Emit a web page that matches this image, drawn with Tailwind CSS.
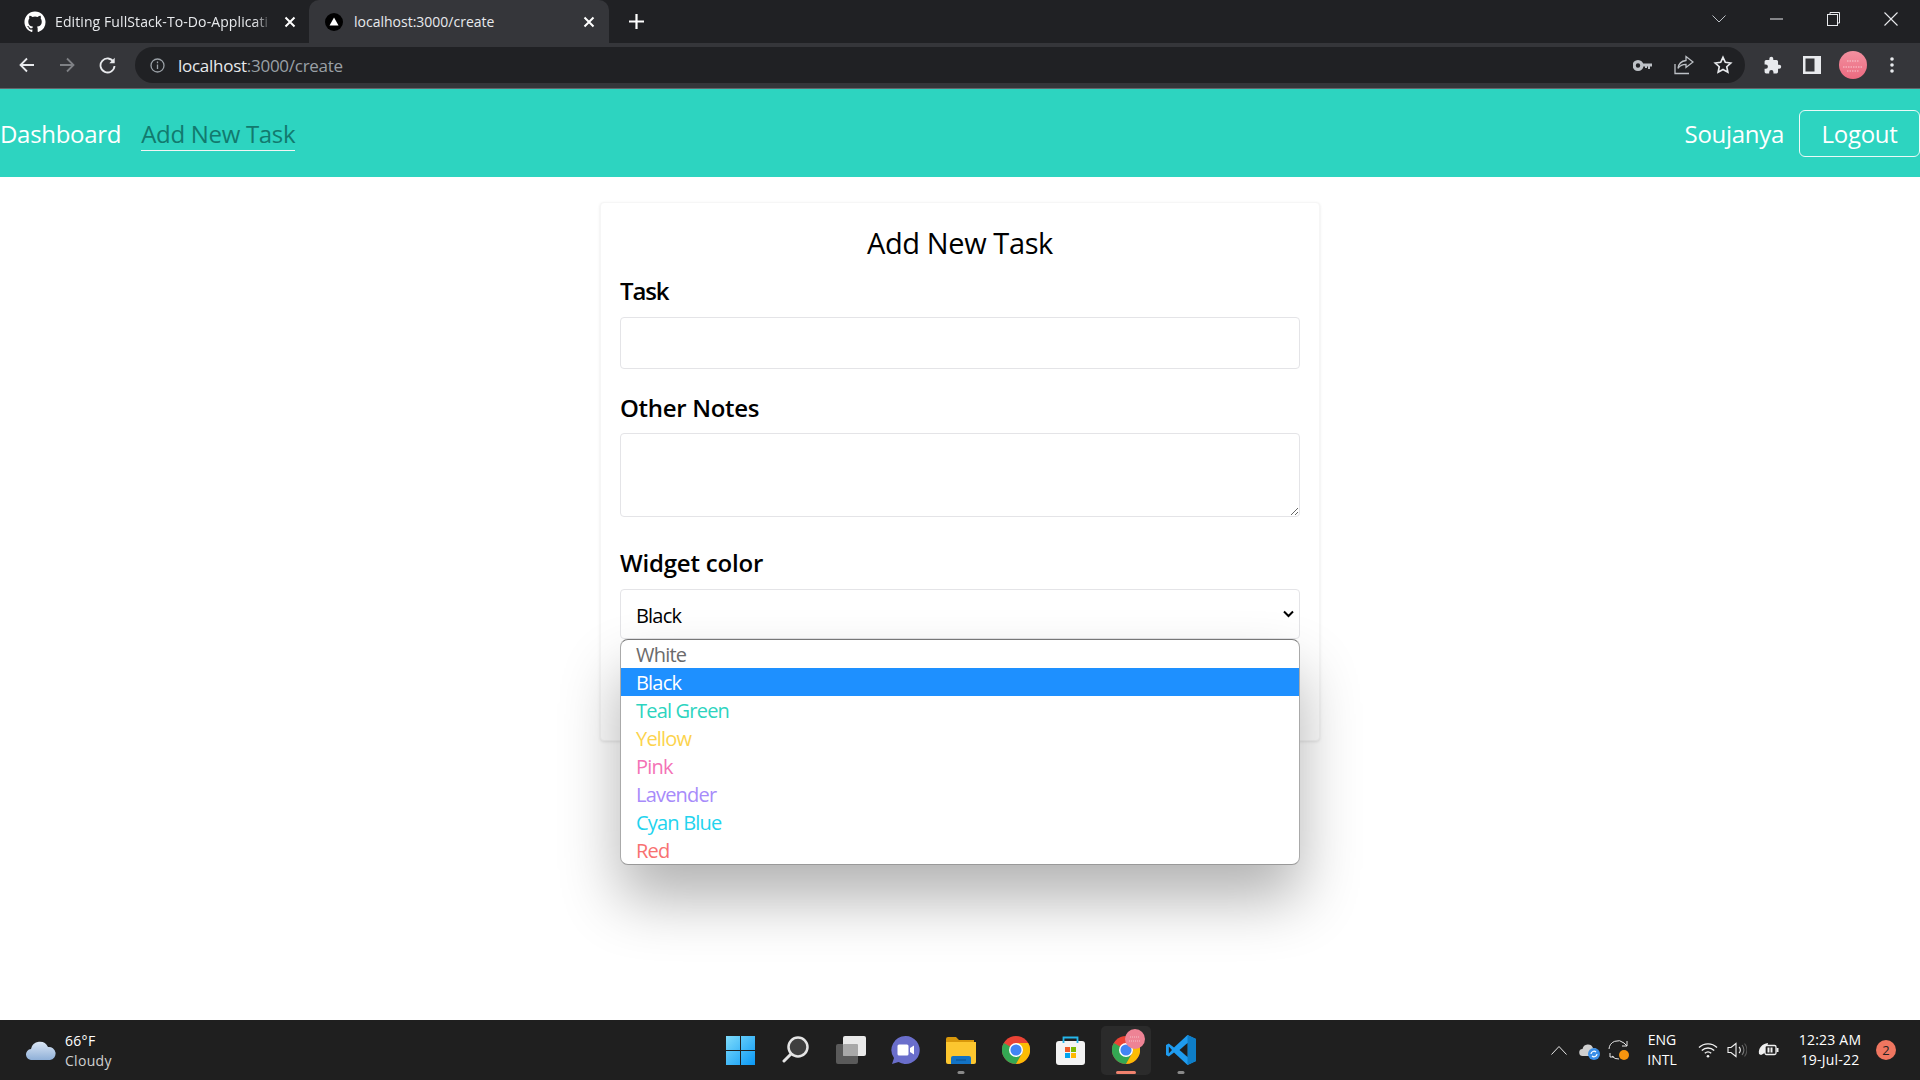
<!DOCTYPE html>
<html lang="en">
<head>
<meta charset="utf-8">
<title>localhost:3000/create</title>
<script src="https://cdn.jsdelivr.net/npm/@tailwindcss/browser@4"></script>
</head>
<body class="m-0 bg-white font-['Open_Sans','Noto_Sans',sans-serif]">
<svg width="0" height="0" class="absolute">
  <symbol id="chrome" viewBox="0 0 48 48">
    <circle cx="24" cy="24" r="24" fill="#ea4335"/>
    <path d="M24 24 L3.2 12 A24 24 0 0 0 24 48 L36 27 Z" fill="#34a853"/>
    <path d="M24 12 H44.8 A24 24 0 0 1 24 48 L36 27 Z" fill="#fbbc04"/>
    <circle cx="24" cy="24" r="12" fill="#fff"/>
    <circle cx="24" cy="24" r="9.5" fill="#4285f4"/>
  </symbol>
</svg>
<div class="flex h-[1080px] w-[1920px] flex-col overflow-hidden">
  <!-- tab strip -->
  <div class="flex h-[43px] shrink-0 items-center bg-[#202124] text-white">
    <div class="flex h-full w-[309px] items-center pl-[24px] pr-[11px] text-[14px] tracking-[0.1px]">
      <svg class="h-[22px] w-[22px] shrink-0" viewBox="0 0 24 24" fill="#fff"><path d="M12 .5C5.65.5.5 5.65.5 12c0 5.08 3.29 9.39 7.86 10.91.58.1.79-.25.79-.56v-2.15c-3.2.7-3.87-1.36-3.87-1.36-.52-1.33-1.28-1.68-1.28-1.68-1.05-.71.08-.7.08-.7 1.16.08 1.77 1.19 1.77 1.19 1.03 1.76 2.69 1.25 3.35.96.1-.75.4-1.25.73-1.54-2.55-.29-5.24-1.28-5.24-5.69 0-1.26.45-2.28 1.19-3.09-.12-.29-.52-1.46.11-3.05 0 0 .97-.31 3.16 1.18a11 11 0 0 1 5.76 0c2.2-1.49 3.16-1.18 3.16-1.18.63 1.59.23 2.76.11 3.05.74.81 1.19 1.83 1.19 3.09 0 4.42-2.69 5.39-5.25 5.68.41.36.78 1.06.78 2.14v3.17c0 .31.21.67.8.56A11.5 11.5 0 0 0 23.5 12C23.5 5.65 18.35.5 12 .5z"/></svg>
      <span class="mb-[1px] ml-[9px] w-[217px] shrink-0 whitespace-nowrap text-[#e8eaed] [mask-image:linear-gradient(to_right,#000_92%,transparent)]">Editing FullStack-To-Do-Applicati</span>
      <svg class="ml-[12px] h-[12px] w-[12px] shrink-0" viewBox="0 0 12 12" stroke="#fff" stroke-width="2"><path d="M1.5 1.5l9 9M10.5 1.5l-9 9"/></svg>
    </div>
    <div class="flex h-full w-[300px] items-center rounded-t-[10px] bg-[#35363a] pl-[16px] text-[14px] tracking-[0px]">
      <svg class="h-[18px] w-[18px] shrink-0" viewBox="0 0 18 18"><circle cx="9" cy="9" r="9" fill="#000"/><path d="M9 4.5L13.5 12.5H4.5Z" fill="#fff"/></svg>
      <span class="mb-[1px] ml-[11px] w-[224px] shrink-0 whitespace-nowrap text-[#e8eaed]">localhost:3000/create</span>
      <svg class="ml-[5px] h-[12px] w-[12px] shrink-0" viewBox="0 0 12 12" stroke="#fff" stroke-width="2"><path d="M1.5 1.5l9 9M10.5 1.5l-9 9"/></svg>
    </div>
    <svg class="ml-[20px] h-[15px] w-[15px]" viewBox="0 0 15 15" stroke="#fff" stroke-width="2.2"><path d="M7.5 0v15M0 7.5h15"/></svg>
    <div class="flex-1"></div>
    <svg class="mb-[5px] mr-[44px] h-[8px] w-[14px]" viewBox="0 0 14 8" fill="none" stroke="#bdc1c6" stroke-width="1"><path d="M.5.5L7 7 13.5.5"/></svg>
    <svg class="mb-[5px] mr-[44px] h-[2px] w-[13px]" viewBox="0 0 13 2"><path d="M0 1h13" stroke="#e8eaed" stroke-width="1"/></svg>
    <svg class="mb-[5px] mr-[44px] h-[14px] w-[13px]" viewBox="0 0 13 14" fill="none" stroke="#e8eaed" stroke-width="1"><rect x=".5" y="2.5" width="10" height="11"/><path d="M3 2.5V.5h9.5v10.5h-2"/></svg>
    <svg class="mb-[5px] mr-[22px] h-[14px] w-[14px]" viewBox="0 0 14 14" stroke="#e8eaed" stroke-width="1.1"><path d="M.5.5l13 13M13.5.5l-13 13"/></svg>
  </div>
  <!-- toolbar -->
  <div class="flex h-[46px] shrink-0 items-center border-b border-[#63666b] bg-[#35363a] pb-[1px]">
    <svg class="ml-[19px] h-[16px] w-[16px]" viewBox="0 0 16 16" fill="none" stroke="#e8eaed" stroke-width="1.8"><path d="M15 8H2M8 1.5L1.5 8 8 14.5"/></svg>
    <svg class="ml-[24px] h-[16px] w-[16px]" viewBox="0 0 16 16" fill="none" stroke="#7f8185" stroke-width="1.8"><path d="M1 8h13M8 1.5L14.5 8 8 14.5"/></svg>
    <svg class="ml-[24px] h-[17px] w-[17px]" viewBox="0 0 17 17" fill="none" stroke="#e8eaed" stroke-width="1.8"><path d="M14.6 5A7 7 0 1 0 15.5 9"/><path d="M15.7 .8v5.4h-5.4" fill="#e8eaed" stroke="none"/></svg>
    <div class="ml-[19px] flex h-[36px] w-[1610px] items-center rounded-full bg-[#202124]">
      <svg class="ml-[15px] h-[15px] w-[15px]" viewBox="0 0 15 15" fill="none" stroke="#9aa0a6" stroke-width="1.3"><circle cx="7.5" cy="7.5" r="6.5"/><path d="M7.5 6.5v4.5M7.5 3.6v1.6"/></svg>
      <span class="ml-[13px] text-[17px] leading-none tracking-[-0.27px] text-[#e8eaed]">localhost<span class="text-[#9aa0a6]">:3000/create</span></span>
      <div class="flex-1"></div>
      <svg class="mr-[22px] h-[11px] w-[19px]" viewBox="0 0 19 11" fill="#bdc1c6"><path d="M5 0a5.5 5.5 0 1 1 0 11A5.5 5.5 0 0 1 5 0zm0 3.3a2.2 2.2 0 1 0 0 4.4 2.2 2.2 0 0 0 0-4.4zM10 3.5h9v3h-2v2.6h-2V6.5h-1v1.6h-2V6.5h-2z"/></svg>
      <svg class="mr-[19px] h-[20px] w-[20px]" viewBox="0 0 20 20" fill="none" stroke="#bdc1c6" stroke-width="1.3"><path d="M1 9v9.5h14"/><path d="M12 1.5L19 7l-7 5.500V9.300c-3.600 0-6 1-8 4 .6-4.500 3.400-7.300 8-7.800z"/></svg>
      <svg class="mr-[12px] h-[20px] w-[20px]" viewBox="0 0 24 24" fill="none" stroke="#e8eaed" stroke-width="2"><path d="M12 2.800l2.800 6 6.500.8-4.800 4.500 1.300 6.500-5.800-3.300-5.800 3.300 1.300-6.500-4.800-4.500 6.500-.8z"/></svg>
    </div>
    <svg class="ml-[18px] h-[19px] w-[19px]" viewBox="0 0 24 24" fill="#e8eaed"><path d="M20.500 11H19V7a2 2 0 0 0-2-2h-4V3.500a2.500 2.500 0 0 0-5 0V5H4a2 2 0 0 0-2 2v3.800h1.500a2.700 2.700 0 0 1 0 5.400H2V20a2 2 0 0 0 2 2h3.800v-1.500a2.700 2.700 0 0 1 5.400 0V22H17a2 2 0 0 0 2-2v-4h1.500a2.500 2.500 0 0 0 0-5z"/></svg>
    <svg class="ml-[21px] h-[18px] w-[18px]" viewBox="0 0 18 18"><rect width="18" height="18" fill="#e8eaed"/><rect x="2.500" y="2.500" width="9" height="13" fill="#35363a"/></svg>
    <svg class="ml-[18px] h-[28px] w-[28px]" viewBox="0 0 28 28"><defs><linearGradient id="av" x1="0" y1="0" x2="0" y2="1"><stop offset="0" stop-color="#f2909f"/><stop offset="1" stop-color="#ec6a80"/></linearGradient></defs><circle cx="14" cy="14" r="14" fill="url(#av)"/><path d="M8 10h12M4 16h20M8 20h12" stroke="#fff" stroke-opacity=".6" stroke-dasharray="1.500 1"/></svg>
    <svg class="ml-[23px] h-[16px] w-[4px]" viewBox="0 0 4 16" fill="#e8eaed"><circle cx="2" cy="2" r="1.800"/><circle cx="2" cy="8" r="1.800"/><circle cx="2" cy="14" r="1.800"/></svg>
  </div>
  <!-- navbar -->
  <nav class="flex h-[88px] shrink-0 items-center bg-[#2dd4c0] text-[24px] tracking-[-0.3px] text-white">
    <a class="pt-[1px]">Dashboard</a>
    <a class="ml-[20px] mt-[1px] border-b border-[#f1f5f4] leading-[33px] text-[#127a6e]">Add New Task</a>
    <div class="flex-1"></div>
    <span class="mt-[1px]">Soujanya</span>
    <button class="ml-[15px] h-[47px] w-[121px] rounded-[6px] border border-[#eafaf8] pt-[1px] text-white">Logout</button>
  </nav>
  <!-- page -->
  <main class="relative flex-1 bg-white">
    <div class="mx-auto mt-[25px] flex h-[539px] w-[720px] flex-col rounded-[4px] border border-[#f6f6f6] bg-white px-[19px] shadow-[0_1px_3px_rgba(0,0,0,0.1)] text-black">
      <h1 class="mt-[17px] text-center text-[29px] leading-[46px] tracking-[-0.4px]">Add New Task</h1>
      <label class="mt-[9px] text-[24px] font-semibold leading-[32px] tracking-[-1.1px]">Task</label>
      <input class="mt-[10px] h-[52px] w-full shrink-0 rounded-[4px] border border-[#e4e4e7] bg-white" type="text">
      <label class="mt-[23px] text-[24px] font-semibold leading-[32px] tracking-[-0.3px]">Other Notes</label>
      <textarea class="mt-[9px] h-[84px] w-full shrink-0 resize-y rounded-[4px] border border-[#e4e4e7] bg-white"></textarea>
      <label class="mt-[30px] text-[24px] font-semibold leading-[32px] tracking-[-0.2px]">Widget color</label>
      <div class="mt-[10px] flex h-[50px] w-full shrink-0 items-center rounded-[4px] border border-[#e4e4e7] pl-[15px] pr-[5px] text-[20px] tracking-[-0.8px]">
        <span class="mt-[3px] flex-1">Black</span>
        <svg class="h-[8px] w-[11px]" viewBox="0 0 11 8" fill="none" stroke="#000" stroke-width="2"><path d="M1 1.500l4.500 4.500L10 1.500"/></svg>
      </div>
      <button class="mt-[17px] h-[45px] w-full shrink-0 rounded-[4px] bg-[#2dd4c0]" aria-label="Add task"></button>
    </div>
    <!-- open select popup -->
    <ul class="absolute left-[620px] top-[462px] w-[680px] overflow-hidden rounded-[8px] border border-t-[#777] border-r-[#aaa] border-b-[#999] border-l-[#aaa] bg-white text-[20px] leading-[30px] tracking-[-0.8px] shadow-[0_34px_60px_rgba(0,0,0,0.3)]">
      <li class="h-[28px] pl-[15px] text-[#6b6b6b]">White</li>
      <li class="h-[28px] bg-[#1e90ff] pl-[15px] text-white">Black</li>
      <li class="h-[28px] pl-[15px] text-[#2dd4bf]">Teal Green</li>
      <li class="h-[28px] pl-[15px] text-[#fcd34d]">Yellow</li>
      <li class="h-[28px] pl-[15px] text-[#f472b6]">Pink</li>
      <li class="h-[28px] pl-[15px] text-[#a78bfa]">Lavender</li>
      <li class="h-[28px] pl-[15px] text-[#22d3ee]">Cyan Blue</li>
      <li class="h-[28px] pl-[15px] text-[#f87171]">Red</li>
    </ul>
  </main>
  <!-- taskbar -->
  <footer class="relative flex h-[60px] shrink-0 items-center bg-[#1f1f1f] text-white">
    <svg class="ml-[26px] h-[20px] w-[30px]" viewBox="0 0 30 20"><defs><linearGradient id="cl" x1="0" y1="0" x2="0" y2="1"><stop offset="0" stop-color="#dbe6f5"/><stop offset="1" stop-color="#8fb0d8"/></linearGradient></defs><path d="M6 20a5.500 5.500 0 0 1-1-11 9 9 0 0 1 17-2 6.500 6.500 0 0 1 2 13z" fill="url(#cl)"/></svg>
    <div class="ml-[9px] flex flex-col pt-[2px] text-[14px] leading-[20px] tracking-[0.3px]">
      <span>66°F</span>
      <span class="text-[#cfcfcf]">Cloudy</span>
    </div>
    <div class="flex-1"></div>
    <div class="flex items-center gap-[8px] pr-[24px] text-[14px] leading-[20px]">
      <svg class="h-[10px] w-[16px]" viewBox="0 0 16 10" fill="none" stroke="#e8e8e8" stroke-width="1"><path d="M.5 9.500L8 1.500l7.500 8"/></svg>
      <svg class="ml-[4px] h-[20px] w-[21px]" viewBox="0 0 21 20"><path d="M4 16a3.500 3.500 0 0 1-.500-7 5.500 5.500 0 0 1 10.500-1 4 4 0 0 1 1 8z" fill="#cfcfcf"/><circle cx="15" cy="14" r="6" fill="#3a8ee6"/><path d="M12 14a3 3 0 0 1 5-2M18 14a3 3 0 0 1-5 2" fill="none" stroke="#fff" stroke-width="1.200"/></svg>
      <svg class="ml-[0px] h-[22px] w-[22px]" viewBox="0 0 22 22" fill="none" stroke="#e8e8e8" stroke-width="1"><path d="M1 10a9 9 0 0 1 15-6l3 3M19 2v5h-5M11 20a8 8 0 0 1-7-3M2 14v4h4"/><circle cx="16" cy="16" r="5" fill="#f7950e" stroke="none"/></svg>
      <div class="ml-[6px] flex w-[36px] flex-col items-center tracking-[0px]"><span>ENG</span><span>INTL</span></div>
      <svg class="ml-[10px] h-[16px] w-[20px]" viewBox="0 0 20 16" fill="none" stroke="#f0f0f0" stroke-width="1.400"><path d="M1 5.500a13 13 0 0 1 18 0M3.800 8.500a9 9 0 0 1 12.400 0M6.800 11.300a4.800 4.800 0 0 1 6.400 0"/><circle cx="10" cy="14.300" r="1.300" fill="#f0f0f0" stroke="none"/></svg>
      <svg class="ml-[1px] h-[16px] w-[20px]" viewBox="0 0 20 16" fill="none" stroke="#f0f0f0" stroke-width="1.100"><path d="M1 5.500h3L9 1.500v13L4 10.500H1z"/><path d="M12 5a4 4 0 0 1 0 6"/><path d="M15 3a7.500 7.500 0 0 1 0 10" stroke="#777"/><path d="M17.500 1.500a10 10 0 0 1 0 13" stroke="#555"/></svg>
      <svg class="ml-[3px] h-[16px] w-[21px]" viewBox="0 0 21 16"><path d="M1 12C0 6 4 2 10 1 9 6 9 11 3 13z" fill="#f0f0f0"/><rect x="7" y="3.500" width="11" height="9" rx="1.500" fill="#1f1f1f" stroke="#f0f0f0" stroke-width="1.300"/><rect x="9.500" y="5.500" width="2" height="5" fill="#f0f0f0"/><rect x="12.500" y="5.500" width="2" height="5" fill="#f0f0f0"/><rect x="18.500" y="6" width="2" height="4" fill="#f0f0f0"/></svg>
      <div class="ml-[9px] flex w-[68px] flex-col items-center tracking-[0.2px]"><span>12:23 AM</span><span>19-Jul-22</span></div>
      <div class="ml-[4px] flex h-[20px] w-[20px] items-center justify-center rounded-full bg-[#ef7660] text-[13px] text-[#222]">2</div>
    </div>
    <!-- centered app icons -->
    <div class="absolute left-[712px] top-0 flex h-full items-center">
      <div class="relative flex h-[49px] w-[56px] items-center justify-center">
        <svg class="h-[29px] w-[29px]" viewBox="0 0 29 29"><defs><linearGradient id="wi" x1="0" y1="0" x2="1" y2="1"><stop offset="0" stop-color="#7fdcfb"/><stop offset="1" stop-color="#0a98f5"/></linearGradient></defs><path d="M0 0h14v14H0zM15 0h14v14H15zM0 15h14v14H0zM15 15h14v14H15z" fill="url(#wi)"/></svg>
      </div>
      <div class="relative flex h-[49px] w-[56px] items-center justify-center">
        <svg class="h-[28px] w-[28px]" viewBox="0 0 28 28"><circle cx="16" cy="11" r="9.500" fill="#3f3f3f" stroke="#e4e4e4" stroke-width="2.500"/><path d="M9 18l-7 7" stroke="#e4e4e4" stroke-width="3" stroke-linecap="round"/></svg>
      </div>
      <div class="relative flex h-[49px] w-[54px] items-center justify-center">
        <svg class="h-[29px] w-[30px]" viewBox="0 0 30 29"><rect y="8" width="22" height="20" rx="2" fill="#5a5a5a"/><rect x="7" y="0" width="23" height="20" rx="2" fill="#e9e9e9"/><rect x="7" y="8" width="15" height="12" rx="1" fill="#a8a8a8"/></svg>
      </div>
      <div class="relative flex h-[49px] w-[55px] items-center justify-center">
        <svg class="h-[28px] w-[29px]" viewBox="0 0 29 28"><path d="M14.500 0a14 14 0 1 1-7 26L1 28l2-6A14 14 0 0 1 14.500 0z" fill="#6a6ecb"/><rect x="6.500" y="8.500" width="11" height="11" rx="1.500" fill="#fff"/><path d="M19 12l4-2.500v9L19 16z" fill="#fff"/></svg>
      </div>
      <div class="relative flex h-[49px] w-[56px] items-center justify-center">
        <svg class="h-[27px] w-[30px]" viewBox="0 0 30 27"><path d="M0 2a2 2 0 0 1 2-2h8l3 3h15v8H0z" fill="#d9980b"/><path d="M0 5h30v20a2 2 0 0 1-2 2H2a2 2 0 0 1-2-2z" fill="#fcc62f"/><path d="M5 21a2 2 0 0 1 2-2h16a2 2 0 0 1 2 2v6H5z" fill="#1272c4"/><path d="M10 23h10" stroke="#0b4f8c" stroke-width="1"/></svg>
        <div class="absolute bottom-[1px] left-1/2 h-[3px] w-[7px] -translate-x-1/2 rounded-full bg-[#8a8a8a]"></div>
      </div>
      <div class="relative flex h-[49px] w-[54px] items-center justify-center">
        <svg class="h-[28px] w-[28px]"><use href="#chrome"/></svg>
      </div>
      <div class="relative flex h-[49px] w-[55px] items-center justify-center">
        <svg class="h-[29px] w-[29px]" viewBox="0 0 29 29"><rect y="5" width="29" height="24" rx="3" fill="#f3f3f3"/><path d="M7.500 7V1.500h14V7" fill="none" stroke="#25b6ea" stroke-width="1.800"/><path d="M9 11h5v5H9z" fill="#ef5a2a"/><path d="M15 11h5v5h-5z" fill="#7dba00"/><path d="M9 17h5v5H9z" fill="#00a4ef"/><path d="M15 17h5v5h-5z" fill="#ffb900"/></svg>
      </div>
      <div class="relative mx-[3px] flex h-[49px] w-[50px] items-center justify-center rounded-[5px] bg-[#2b2b2b]">
        <svg class="h-[28px] w-[28px]"><use href="#chrome"/></svg>
        <svg class="absolute left-[24px] top-[3px] h-[20px] w-[20px]" viewBox="0 0 20 20"><circle cx="10" cy="10" r="10" fill="#ee8395"/><path d="M5 8h10M4 12h12" stroke="#fff" stroke-opacity=".5" stroke-dasharray="1 1"/></svg>
        <div class="absolute bottom-[1px] left-1/2 h-[3px] w-[20px] -translate-x-1/2 rounded-full bg-[#f0826e]"></div>
      </div>
      <div class="relative flex h-[49px] w-[54px] items-center justify-center">
        <svg class="h-[30px] w-[30px]" viewBox="0 0 30 30"><path d="M21.500 0L30 4v22l-8.500 4L8 17.500 2.800 21.500 0 20V10l2.800-1.500L8 12.500z" fill="#1f9cf0"/><path d="M21.500 0L30 4v22l-8.500 4z" fill="#0e7ec8"/><path d="M21.500 8l-8 7 8 7z" fill="#1f1f1f"/><path d="M2.800 11.500L6 15l-3.200 3.500z" fill="#1f1f1f"/></svg>
        <div class="absolute bottom-[1px] left-1/2 h-[3px] w-[7px] -translate-x-1/2 rounded-full bg-[#8a8a8a]"></div>
      </div>
    </div>
  </footer>
</div>
</body>
</html>
